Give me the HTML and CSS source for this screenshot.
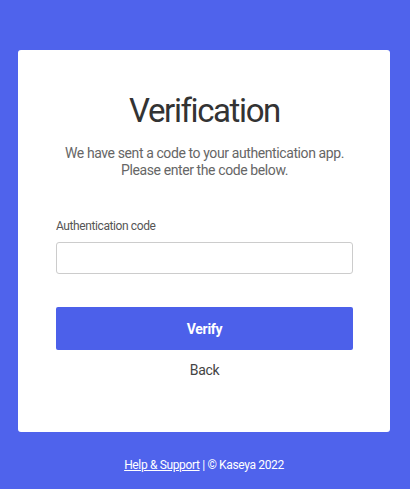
FILE: index.html
```html
<!DOCTYPE html>
<html lang="en">
<head>
  <meta charset="UTF-8" />
  <title>Verification</title>
  <meta name="viewport" content="width=device-width, initial-scale=1.0" />
  <link rel="stylesheet" href="styles.css">
</head>
<body>

  <!-- card -->
  <div class="card">
    <h1 class="title">Verification</h1>
    <p class="subtitle">We have sent a code to your authentication app.<br>Please enter the code below.</p>

    <label class="field-label" for="code">Authentication code</label>
    <input class="field-input" id="code" type="text" />

    <button class="verify-button">Verify</button>
    <a href="#" class="back-link">Back</a>
  </div>

  <!-- footer -->
  <div class="footer">
    <a href="#">Help &amp; Support</a> | &copy; Kaseya 2022
  </div>

</body>
</html>
```

FILE: styles.css
```css
body {
  margin: 0;
  padding: 50px 20px 0 18px;
  background-color: #4f63ec;
  font-family: Roboto, "Liberation Sans", sans-serif;
  height: 489px;
  box-sizing: border-box;
}

.card {
  background-color: white;
  border-radius: 3px;
  height: 382px;
  padding: 41px 37px 0 38px;
  box-sizing: border-box;
  display: flex;
  flex-direction: column;
}

.title {
  margin: 0;
  text-align: center;
  font-size: 33px;
  font-weight: 400;
  letter-spacing: -1.4px;
  color: #333;
  line-height: 40px;
}

.subtitle {
  margin: 14px 0 0;
  text-align: center;
  font-size: 14px;
  line-height: 17px;
  letter-spacing: -0.4px;
  color: #666;
}

.field-label {
  margin-top: 39px;
  font-size: 12px;
  line-height: 16px;
  letter-spacing: -0.4px;
  color: #555;
}

.field-input {
  margin-top: 8px;
  height: 32px;
  border: 1px solid #ccc;
  border-radius: 3px;
  box-sizing: border-box;
  padding: 0 8px;
  font-size: 14px;
}

.verify-button {
  margin-top: 33px;
  height: 43px;
  background-color: #4c60ea;
  color: white;
  border: none;
  border-radius: 2px;
  font-family: inherit;
  font-size: 14px;
  font-weight: bold;
  letter-spacing: -0.3px;
}

.back-link {
  margin-top: 11px;
  align-self: center;
  color: #444;
  text-decoration: none;
  font-size: 14px;
  line-height: 18px;
  letter-spacing: -0.3px;
}

.footer {
  margin-top: 25px;
  text-align: center;
  color: white;
  font-size: 12px;
  line-height: 16px;
  letter-spacing: -0.35px;
}

.footer a {
  color: white;
}
```
